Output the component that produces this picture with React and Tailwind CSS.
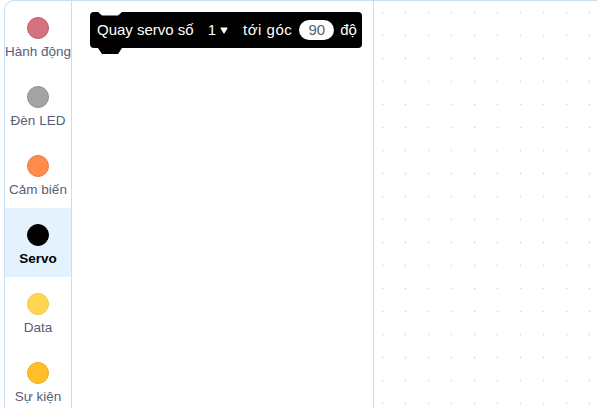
import React from "react";

const cats = [
  { label: "Hành động", fill: "#d4737e", border: "#c0606c" },
  { label: "Đèn LED", fill: "#a3a3a3", border: "#8f8f8f" },
  { label: "Cảm biến", fill: "#ff8c4b", border: "#ea7a3b" },
  { label: "Servo", fill: "#000000", border: "#000000", active: true },
  { label: "Data", fill: "#ffd651", border: "#f2c640" },
  { label: "Sự kiện", fill: "#ffbf2a", border: "#eeab1c" },
];

function Block() {
  return (
    <div className="relative ml-[18px] mt-[11px] h-[44px] w-[272px]">
      <svg className="absolute left-0 top-0" width="272" height="44" viewBox="0 0 272 44">
        <path
          d="M0 4 A4 4 0 0 1 4 0 H8 L12 3.5 H28 L32 0 H268 A4 4 0 0 1 272 4 V32 A4 4 0 0 1 268 36 H32 L28 42 H12 L8 36 H4 A4 4 0 0 1 0 32 Z"
          fill="#000"
        />
      </svg>
      <div className="relative flex h-[36px] items-center pl-[7px] text-[15px] text-white">
        <span>Quay servo số</span>
        <span className="ml-[14px] flex items-center">
          1
          <svg className="ml-[4px]" width="8" height="7" viewBox="0 0 8 7">
            <path d="M1 1 H7 L4 6 Z" fill="#fff" stroke="#fff" strokeWidth="1.2" strokeLinejoin="round" />
          </svg>
        </span>
        <span className="ml-[15px] tracking-[0.5px]">tới góc</span>
        <span className="ml-[7px] flex h-[20px] w-[35px] items-center justify-center rounded-full bg-white text-[#575e75]">
          90
        </span>
        <span className="ml-[6px]">độ</span>
      </div>
    </div>
  );
}

export default function App() {
  return (
    <div
      className="h-[408px] w-[597px] overflow-hidden bg-white pl-[4px]"
      style={{ fontFamily: '"Liberation Sans", Arial, sans-serif' }}
    >
      <div className="flex h-full rounded-tl-[10px] border-l border-t border-[#c7e0f7]">
        <div className="flex w-[67px] shrink-0 flex-col border-r border-[#c7e0f7]">
          {cats.map((c) => (
            <div
              key={c.label}
              className={
                "flex h-[69px] shrink-0 flex-col items-center pt-[16px] " +
                (c.active ? "bg-[#e3f2fd]" : "")
              }
            >
              <div
                className="h-[22px] w-[22px] rounded-full border"
                style={{ backgroundColor: c.fill, borderColor: c.border }}
              />
              <div
                className={
                  "mt-[5px] whitespace-nowrap text-[13.5px] leading-[16px] " +
                  (c.active ? "font-bold text-black" : "text-[#575e75]")
                }
              >
                {c.label}
              </div>
            </div>
          ))}
        </div>
        <div className="flex flex-1 bg-white bg-[radial-gradient(circle,#dedede_0.8px,transparent_1.2px)] bg-[length:23px_23px]">
          <div className="w-[302px] shrink-0 border-r border-[#c7e0f7] bg-white/85">
            <Block />
          </div>
        </div>
      </div>
    </div>
  );
}
